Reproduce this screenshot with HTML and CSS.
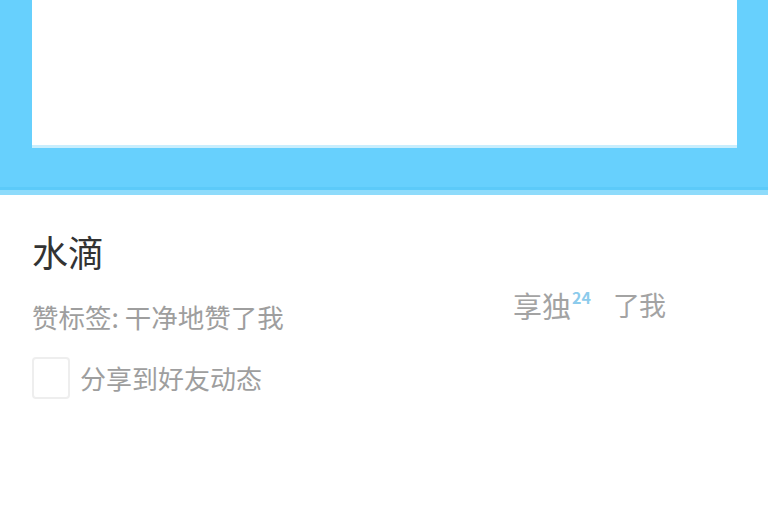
FILE: index.html
```html
<!DOCTYPE html>
<html lang="zh">
<head>
<meta charset="utf-8">
<link rel="stylesheet" href="styles.css">
</head>
<body>
<div class="hero">
  <div class="panel"></div>
  <div class="band"></div>
</div>
<div class="info">
  <div class="name">水滴</div>
  <div class="row">
    <div class="label">赞标签: 干净地赞了我</div>
    <div class="liked">享独<sup class="tag">24</sup><span class="after">了我</span></div>
  </div>
  <label class="share">
    <span class="box"></span>
    <span class="share-text">分享到好友动态</span>
  </label>
</div>
</body>
</html>
```
FILE: styles.css
```css
html, body {
  margin: 0;
  padding: 0;
  background: #ffffff;
  font-family: "Noto Sans CJK SC", "Noto Sans", sans-serif;
}
.hero {
  background: #67d0fd;
  height: 195px;
  display: flex;
  flex-direction: column;
  border-bottom: 5px solid #8edbfb;
  box-sizing: border-box;
}
.panel {
  background: #ffffff;
  height: 145px;
  margin: 0 31px 0 32px;
  border-bottom: 3px solid #c9eefd;
  box-sizing: content-box;
}
.band {
  flex: 1;
  border-bottom: 3px solid #5ccaf9;
}
.info {
  padding: 35px 0 0 32px;
  display: flex;
  flex-direction: column;
}
.name {
  font-size: 36px;
  line-height: 42px;
  color: #333333;
}
.row {
  display: flex;
  align-items: flex-start;
  margin-top: 14px;
}
.label {
  font-size: 26.5px;
  line-height: 30px;
  color: #9e9e9e;
  margin-top: 16px;
  width: 481px;
}
.liked {
  font-size: 29px;
  line-height: 34px;
  color: #a3a3a3;
  margin-top: 2px;
  display: flex;
  align-items: flex-start;
}
.tag {
  font-size: 16px;
  font-weight: bold;
  color: #8ccbec;
  line-height: 18px;
  margin: 0 22px 0 1px;
}
.after {
  font-size: 27px;
  letter-spacing: -1px;
}
.share {
  display: flex;
  align-items: center;
  gap: 10px;
  margin-top: 25px;
}
.box {
  width: 34px;
  height: 38px;
  border: 2px solid #eeeeee;
  border-radius: 4px;
}
.share-text {
  font-size: 26px;
  line-height: 30px;
  color: #9e9e9e;
}
```
